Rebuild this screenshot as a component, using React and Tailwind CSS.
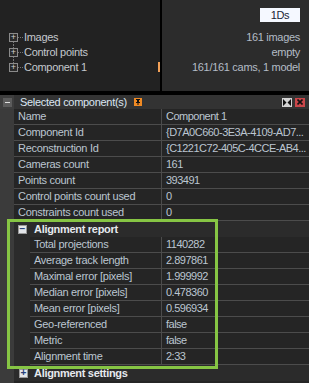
import React from 'react';

const rows = [
  ['Name', 'Component 1'],
  ['Component Id', '{D7A0C660-3E3A-4109-AD7...'],
  ['Reconstruction Id', '{C1221C72-405C-4CCE-AB4...'],
  ['Cameras count', '161'],
  ['Points count', '393491'],
  ['Control points count used', '0'],
  ['Constraints count used', '0'],
];

const report = [
  ['Total projections', '1140282'],
  ['Average track length', '2.897861'],
  ['Maximal error [pixels]', '1.999992'],
  ['Median error [pixels]', '0.478360'],
  ['Mean error [pixels]', '0.596934'],
  ['Geo-referenced', 'false'],
  ['Metric', 'false'],
  ['Alignment time', '2:33'],
];

function TreeBox({ sign }) {
  return (
    <span className="w-[9px] h-[9px] border border-[#8a8a8a] bg-[#2a2a2a] flex items-center justify-center text-[#cfcfcf] text-[9px] leading-none tracking-normal">
      {sign}
    </span>
  );
}

function ToggleBox({ sign }) {
  return (
    <span className="w-[9px] h-[9px] border border-[#9a9a9a] bg-[#e4e6ea] flex items-center justify-center text-[#27407a] text-[10px] font-bold leading-none tracking-normal">
      {sign}
    </span>
  );
}

function Row({ label, value, indent }) {
  return (
    <div className="flex h-[16px]">
      <div className="w-[14px] bg-[#3b3b3b]" />
      {indent && <div className="w-[16px] bg-[#2b2b2b]" />}
      <div className={`${indent ? 'w-[131px]' : 'w-[147px]'} bg-[#252525] border-b border-[#4c4c4c] pl-[4px] flex items-center text-[#bcc6d1] whitespace-nowrap overflow-hidden`}>
        {label}
      </div>
      <div className="flex-1 min-w-0 bg-[#252525] border-b border-l border-[#4c4c4c] pl-[4px] flex items-center text-[#bcc6d1] whitespace-nowrap overflow-hidden tracking-[-0.5px]">
        {value}
      </div>
    </div>
  );
}

export default function App() {
  return (
    <div className="relative w-[309px] h-[383px] overflow-hidden bg-[#262626] font-['Liberation_Sans',sans-serif] text-[11px] tracking-[-0.3px]">
      {/* Top tree panel */}
      <div className="flex h-[91px]">
        <div className="w-[158px] bg-[#222222] pt-[30px] pl-[9px] text-[#c4c8cd]">
          {['Images', 'Control points', 'Component 1'].map((t, i) => (
            <div key={t} className="flex items-center h-[15px]">
              <div className="flex flex-col items-center w-[9px] h-full">
                <span className={`flex-1 ${i > 0 ? 'border-l border-dotted border-[#777]' : ''}`} />
                <TreeBox sign="+" />
                <span className={`flex-1 ${i < 2 ? 'border-l border-dotted border-[#777]' : ''}`} />
              </div>
              <span className="w-[5px] border-t border-dotted border-[#777] mr-[1px]" />
              <span>{t}</span>
            </div>
          ))}
        </div>
        <div className="w-[2px] bg-[#222222] pt-[62px]">
          <div className="h-[10px] bg-[#f2a057]" />
        </div>
        <div className="w-[2px] bg-black" />
        <div className="flex-1 bg-[#2c2c2c] pt-[8px] pr-[9px] flex flex-col items-end text-[#b4bcc6]">
          <div className="w-[40px] h-[14px] bg-[#f5f8ff] text-[#1a2436] flex items-center justify-center mb-[8px]">1Ds</div>
          <div className="h-[15px] flex items-center">161 images</div>
          <div className="h-[15px] flex items-center">empty</div>
          <div className="h-[15px] flex items-center">161/161 cams, 1 model</div>
        </div>
      </div>
      <div className="h-[4px] bg-black" />

      {/* Panel header */}
      <div className="flex items-center h-[14px] bg-[#333333]">
        <div className="w-[14px] h-full bg-[#3e3e3e] flex items-center justify-center">
          <span className="w-[9px] h-[9px] bg-[#5c5c5c] flex items-center justify-center">
            <span className="w-[5px] h-[1px] bg-[#e0e0e0]" />
          </span>
        </div>
        <span className="ml-[6px] text-[#dce6f2]">Selected component(s)</span>
        <span className="ml-[7px] w-[8px] h-[8px] bg-[#f08a24] flex items-center justify-center">
          <svg width="6" height="6" viewBox="0 0 6 6">
            <path d="M1 0h4v1H4v2h1v1H3.5v2h-1V4H1V3h1V1H1z" fill="#111" />
          </svg>
        </span>
        <span className="ml-auto w-[10px] h-[9px] bg-[#d4d4d4] flex items-center justify-center">
          <svg width="8" height="7" viewBox="0 0 8 7">
            <path d="M0 0l3.5 3.5L0 7zM8 0L4.5 3.5 8 7z" fill="#111" />
          </svg>
        </span>
        <span className="ml-[3px] mr-[4px] w-[10px] h-[9px] bg-[#c9474a] flex items-center justify-center">
          <svg width="6" height="6" viewBox="0 0 6 6">
            <path d="M0.5 0.5l5 5M5.5 0.5l-5 5" stroke="#111" strokeWidth="1.6" />
          </svg>
        </span>
      </div>

      {/* Property table */}
      {rows.map(([l, v]) => (
        <Row key={l} label={l} value={v} />
      ))}

      <div className="flex h-[16px]">
        <div className="w-[14px] bg-[#3b3b3b]" />
        <div className="flex-1 bg-[#2b2b2b] flex items-center pl-[4px]">
          <ToggleBox sign="−" />
          <span className="ml-[7px] font-bold text-[#e6e9ee]">Alignment report</span>
        </div>
      </div>
      <div>
        {report.map(([l, v]) => (
          <Row key={l} label={l} value={v} indent />
        ))}
      </div>

      <div className="flex h-[16px]">
        <div className="w-[14px] bg-[#3b3b3b]" />
        <div className="flex-1 bg-[#2b2b2b] flex items-center pl-[5px]">
          <ToggleBox sign="+" />
          <span className="ml-[6px] font-bold text-[#e6e9ee]">Alignment settings</span>
        </div>
      </div>
      <div className="flex h-[2px]">
        <div className="w-[14px] bg-[#3b3b3b]" />
        <div className="flex-1 bg-[#252525]" />
      </div>

      {/* Highlight annotation */}
      <div className="absolute left-[7px] top-[219px] w-[211px] h-[150px] border-[3px] border-[#86c544] pointer-events-none" />
    </div>
  );
}
